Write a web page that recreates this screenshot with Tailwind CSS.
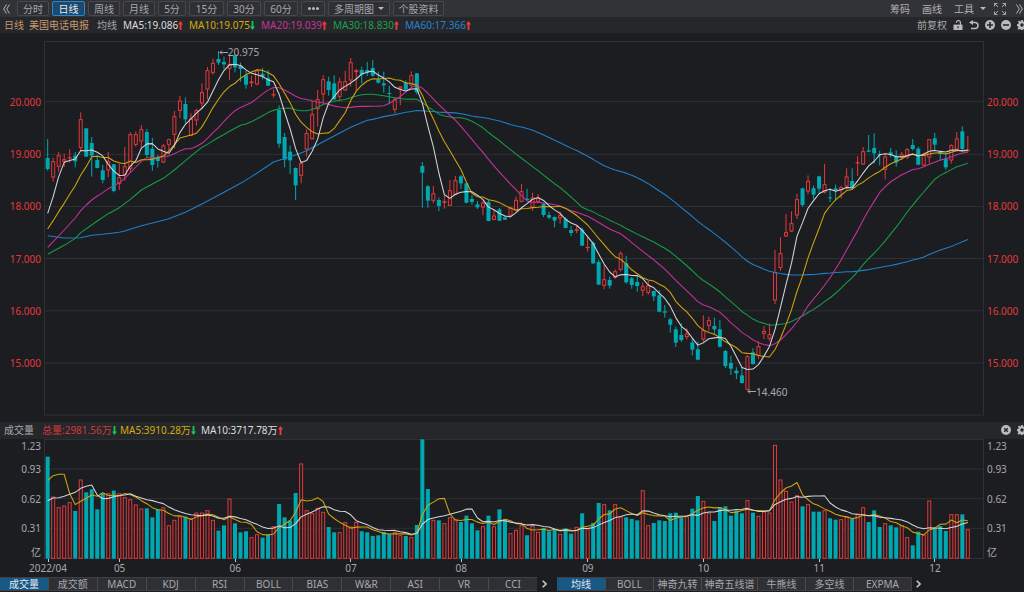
<!DOCTYPE html>
<html lang="zh-CN">
<head>
<meta charset="utf-8">
<title>美国电话电报 日线</title>
<meta name="viewport" content="width=device-width, initial-scale=1">
<script src="https://cdn.jsdelivr.net/npm/@tailwindcss/browser@4"></script>
</head>
<body class="flex h-screen flex-col overflow-hidden bg-[#1c1d21] font-['Noto_Sans','Noto_Sans_CJK_SC',sans-serif] text-[10px] leading-3 text-[#a6a8ac]">

<svg class="hidden">
  <symbol id="gear" viewBox="0 0 16 16"><path fill="currentColor" fill-rule="evenodd" d="M6.6 0h2.8l.5 2.3 1.2.5 2-1.3 2 2-1.3 2 .5 1.200 2.300.5v2.800l-2.300.5-.5 1.200 1.300 2-2 2-2-1.300-1.200.5-.5 2.300H6.600l-.5-2.300-1.200-.5-2 1.300-2-2 1.300-2-.5-1.200L0 9.400V6.600l2.300-.5.5-1.200-1.300-2 2-2 2 1.300 1.200-.5zM8 5.300a2.700 2.700 0 100 5.400 2.700 2.700 0 000-5.400z"/></symbol>
  <symbol id="up" viewBox="0 0 5 9"><path fill="#f4393c" d="M2.500 0L5 3.500H3.400V9H1.600V3.500H0z"/></symbol>
  <symbol id="down" viewBox="0 0 5 9"><path fill="#12c657" d="M2.500 9L5 5.500H3.400V0H1.600V5.500H0z"/></symbol>
</svg>

<header class="flex h-[17px] shrink-0 items-center justify-between overflow-hidden bg-[#323337]">
  <nav class="flex items-center gap-[3px] pl-[3px]" aria-label="周期">
    <button class="mr-[3px] h-[15px] w-2" aria-label="向左"><svg class="h-[10px] w-[7px]" viewBox="0 0 7 10" fill="none" stroke="#b2b4b8"><path d="M3.500.5L.7 5l2.800 4.500M6.500.5L3.700 5l2.800 4.500"/></svg></button>
    <button class="h-[15px] w-8 rounded-xs border border-[#46484d] bg-[#2e3034]">分时</button>
    <button class="h-[15px] w-[33px] rounded-xs border border-[#2389d2] bg-[#1d4a6b] text-[#e6e9ed]">日线</button>
    <button class="h-[15px] w-8 rounded-xs border border-[#46484d] bg-[#2e3034]">周线</button>
    <button class="h-[15px] w-8 rounded-xs border border-[#46484d] bg-[#2e3034]">月线</button>
    <button class="h-[15px] w-7 rounded-xs border border-[#46484d] bg-[#2e3034]">5分</button>
    <button class="h-[15px] w-[35px] rounded-xs border border-[#46484d] bg-[#2e3034]">15分</button>
    <button class="h-[15px] w-[34px] rounded-xs border border-[#46484d] bg-[#2e3034]">30分</button>
    <button class="h-[15px] w-[34px] rounded-xs border border-[#46484d] bg-[#2e3034]">60分</button>
    <button class="flex h-[15px] w-6 items-center justify-center gap-px rounded-xs border border-[#46484d] bg-[#2e3034]" aria-label="更多"><i class="size-[3px] rounded-full bg-[#b8babd]"></i><i class="size-[3px] rounded-full bg-[#b8babd]"></i><i class="size-[3px] rounded-full bg-[#b8babd]"></i></button>
    <button class="flex h-[15px] w-[62px] items-center justify-center gap-1 rounded-xs border border-[#46484d] bg-[#2e3034]">多周期图<svg class="h-[3px] w-[6px]" viewBox="0 0 6 3"><path d="M0 0h6L3 3z" fill="#b8babd"/></svg></button>
    <button class="h-[15px] w-[51px] rounded-xs border border-[#46484d] bg-[#2e3034]">个股资料</button>
  </nav>
  <nav class="flex items-center text-[#b0b2b6]" aria-label="工具">
    <button class="mr-3">筹码</button>
    <button class="mr-3">画线</button>
    <button class="mr-2 flex items-center gap-[6px]">工具<svg class="h-[3px] w-[6px]" viewBox="0 0 6 3"><path d="M0 0h6L3 3z" fill="#b8babd"/></svg></button>
    <button class="mr-[10px]" aria-label="全屏"><svg class="size-3" viewBox="0 0 12 12" fill="none" stroke="#a6a8ac"><path d="M.5 3.500v-3h3M.5.5L4 4M8.500.5h3v3M11.500.5L8 4M.5 8.500v3h3M.5 11.500L4 8M8.500 11.500h3v-3M11.500 11.500L8 8"/></svg></button>
    <button class="w-2" aria-label="向右"><svg class="h-[10px] w-[7px]" viewBox="0 0 7 10" fill="none" stroke="#b2b4b8"><path d="M.5.5L3.300 5 .5 9.500M3.500.5L6.300 5 3.500 9.500"/></svg></button>
  </nav>
</header>

<div class="flex h-4 shrink-0 items-center justify-between overflow-hidden bg-[#26272b]">
  <div class="flex items-center whitespace-nowrap pl-1">
    <span class="w-[25px] text-[#c9996b]">日线</span>
    <span class="w-[68px] text-[#c9996b]">美国电话电报</span>
    <span class="w-[26px]">均线</span>
    <span class="flex w-[66px] items-center text-[#dcdddf]">MA5:19.086<svg class="h-[9px] w-[5px]"><use href="#up"/></svg></span>
    <span class="flex w-[72px] items-center text-[#d5aa0c]">MA10:19.075<svg class="h-[9px] w-[5px]"><use href="#down"/></svg></span>
    <span class="flex w-[72px] items-center text-[#c9349c]">MA20:19.039<svg class="h-[9px] w-[5px]"><use href="#up"/></svg></span>
    <span class="flex w-[72px] items-center text-[#17a34a]">MA30:18.830<svg class="h-[9px] w-[5px]"><use href="#up"/></svg></span>
    <span class="flex items-center text-[#2384d4]">MA60:17.366<svg class="h-[9px] w-[5px]"><use href="#up"/></svg></span>
  </div>
  <div class="-mr-[3px] flex items-center gap-[6px] text-[#b8babd]">
    <button class="text-[#a6a8ac]">前复权</button>
    <button aria-label="锁定"><svg class="size-[10px]" viewBox="0 0 10 10"><path d="M3.400 2.800V2.600a2 2 0 014 0V5" fill="none" stroke="currentColor" stroke-width="1.200"/><path d="M.5 4.600h9V10h-9z" fill="currentColor"/><path d="M4.400 6.200h1.200v2H4.400z" fill="#26272b"/></svg></button>
    <button aria-label="撤销"><svg class="size-[10px]" viewBox="0 0 10 10"><path d="M3 2.500h3a3 3 0 010 6H2" fill="none" stroke="currentColor" stroke-width="1.500"/><path d="M0 2.500L4 0v5z" fill="currentColor"/></svg></button>
    <button aria-label="放大"><svg class="size-[10px]" viewBox="0 0 10 10"><circle cx="5" cy="5" r="5" fill="currentColor"/><path d="M5 2v6M2 5h6" stroke="#26272b" stroke-width="1.600"/></svg></button>
    <button aria-label="缩小"><svg class="size-[10px]" viewBox="0 0 10 10"><circle cx="5" cy="5" r="5" fill="currentColor"/><path d="M2 5h6" stroke="#26272b" stroke-width="1.600"/></svg></button>
    <button aria-label="设置"><svg class="size-[10px]"><use href="#gear"/></svg></button>
  </div>
</div>

<main class="flex min-h-0 flex-1 text-[#e2393c]">
  <div class="flex w-11 shrink-0 flex-col justify-between pr-[3px] pt-[63px] pb-[53px] text-right">
    <span>20.000</span><span>19.000</span><span>18.000</span><span>17.000</span><span>16.000</span><span>15.000</span>
  </div>
  <div class="relative mt-[7px] mb-[6px] min-w-0 flex-1">
    <svg id="price" class="block h-full w-full" viewBox="132 0 2820 1128" preserveAspectRatio="none" role="img" aria-label="K线图"></svg>
    <span class="absolute top-[1.600%] left-[18.600%] flex items-center text-[#a6a8ac]"><svg class="h-[5px] w-[9px]" viewBox="0 0 9 5" fill="none" stroke="#a6a8ac"><path d="M9 2.500H1M3 .5l-2 2 2 2"/></svg>20.975</span>
    <span class="absolute top-[92%] left-[74.800%] flex items-center text-[#a6a8ac]"><svg class="h-[5px] w-[9px]" viewBox="0 0 9 5" fill="none" stroke="#a6a8ac"><path d="M9 2.500H1M3 .5l-2 2 2 2"/></svg>14.460</span>
  </div>
  <div class="flex w-10 shrink-0 flex-col justify-between pl-[3px] pt-[63px] pb-[53px]">
    <span>20.000</span><span>19.000</span><span>18.000</span><span>17.000</span><span>16.000</span><span>15.000</span>
  </div>
</main>

<section class="shrink-0">
  <div class="flex h-[17px] items-center justify-between overflow-hidden bg-[#26272b] pb-px">
    <div class="flex items-center whitespace-nowrap pl-1">
      <span class="w-[38px]">成交量</span>
      <span class="flex w-[78px] items-center text-[#d0383b]">总量:2981.56万<svg class="h-[9px] w-[5px]"><use href="#down"/></svg></span>
      <span class="flex w-[81px] items-center text-[#d5aa0c]">MA5:3910.28万<svg class="h-[9px] w-[5px]"><use href="#down"/></svg></span>
      <span class="flex items-center text-[#dcdddf]">MA10:3717.78万<svg class="h-[9px] w-[5px]"><use href="#up"/></svg></span>
    </div>
    <div class="-mr-[3px] flex items-center gap-[6px] text-[#b8babd]">
      <button aria-label="关闭"><svg class="size-[10px]" viewBox="0 0 10 10"><circle cx="5" cy="5" r="5" fill="currentColor"/><path d="M3.200 3.200l3.600 3.600M6.800 3.200L3.200 6.800" stroke="#26272b" stroke-width="1.400"/></svg></button>
      <button aria-label="指标设置"><svg class="size-[10px]"><use href="#gear"/></svg></button>
    </div>
  </div>
  <div class="flex h-[120px]">
    <div class="grid w-11 shrink-0 grid-rows-[14px_32px_28px_30px_18px] items-center pr-[3px] text-right">
      <span>1.23</span><span>0.93</span><span>0.62</span><span>0.31</span><span>亿</span>
    </div>
    <svg id="volume" class="block h-full min-w-0 flex-1" viewBox="132 57 2820 360" preserveAspectRatio="none" role="img" aria-label="成交量图"></svg>
    <div class="grid w-10 shrink-0 grid-rows-[14px_32px_28px_30px_18px] items-center pl-[3px]">
      <span>1.23</span><span>0.93</span><span>0.62</span><span>0.31</span><span>亿</span>
    </div>
  </div>
  <div class="flex h-[18px] pr-14 pl-12">
    <div class="w-0 flex-[13]"><div class="flex w-12 -translate-x-1/2 flex-col items-center"><i class="h-[3px] w-px bg-[#c4c6c9]"></i><span>2022/04</span></div></div>
    <div class="w-0 flex-[21]"><div class="flex w-12 -translate-x-1/2 flex-col items-center"><i class="h-[3px] w-px bg-[#c4c6c9]"></i><span>05</span></div></div>
    <div class="w-0 flex-[21]"><div class="flex w-12 -translate-x-1/2 flex-col items-center"><i class="h-[3px] w-px bg-[#c4c6c9]"></i><span>06</span></div></div>
    <div class="w-0 flex-[20]"><div class="flex w-12 -translate-x-1/2 flex-col items-center"><i class="h-[3px] w-px bg-[#c4c6c9]"></i><span>07</span></div></div>
    <div class="w-0 flex-[23]"><div class="flex w-12 -translate-x-1/2 flex-col items-center"><i class="h-[3px] w-px bg-[#c4c6c9]"></i><span>08</span></div></div>
    <div class="w-0 flex-[21]"><div class="flex w-12 -translate-x-1/2 flex-col items-center"><i class="h-[3px] w-px bg-[#c4c6c9]"></i><span>09</span></div></div>
    <div class="w-0 flex-[21]"><div class="flex w-12 -translate-x-1/2 flex-col items-center"><i class="h-[3px] w-px bg-[#c4c6c9]"></i><span>10</span></div></div>
    <div class="w-0 flex-[21]"><div class="flex w-12 -translate-x-1/2 flex-col items-center"><i class="h-[3px] w-px bg-[#c4c6c9]"></i><span>11</span></div></div>
    <div class="w-0 flex-[6]"><div class="flex w-12 -translate-x-1/2 flex-col items-center"><i class="h-[3px] w-px bg-[#c4c6c9]"></i><span>12</span></div></div>
  </div>
</section>

<footer class="flex h-[15px] shrink-0 items-stretch whitespace-nowrap pb-px">
  <div class="flex w-[537px] divide-x divide-[#4a4b50] border-y border-[#3e4045] bg-[#2e3034]">
    <button class="flex-1 bg-[#185886] text-[#e6e9ed]">成交量</button>
    <button class="flex-1">成交额</button>
    <button class="flex-1">MACD</button>
    <button class="flex-1">KDJ</button>
    <button class="flex-1">RSI</button>
    <button class="flex-1">BOLL</button>
    <button class="flex-1">BIAS</button>
    <button class="flex-1">W&amp;R</button>
    <button class="flex-1">ASI</button>
    <button class="flex-1">VR</button>
    <button class="flex-1">CCI</button>
  </div>
  <button class="flex w-5 items-center justify-center pr-[6px]" aria-label="更多副图指标"><svg class="h-2 w-[5px]" viewBox="0 0 5 8" fill="none" stroke="#c4c6c9" stroke-width="1.600"><path d="M.7.7L4 4 .7 7.300"/></svg></button>
  <div class="flex divide-x divide-[#4a4b50] border-y border-r border-[#3e4045] bg-[#2e3034]">
    <button class="w-[49px] bg-[#185886] text-[#e6e9ed]">均线</button>
    <button class="w-12">BOLL</button>
    <button class="w-12">神奇九转</button>
    <button class="w-[56px]">神奇五线谱</button>
    <button class="w-12">牛熊线</button>
    <button class="w-12">多空线</button>
    <button class="w-[57px]">EXPMA</button>
  </div>
  <button class="flex w-4 items-center justify-center pr-1" aria-label="更多主图指标"><svg class="h-2 w-[5px]" viewBox="0 0 5 8" fill="none" stroke="#c4c6c9" stroke-width="1.600"><path d="M.7.7L4 4 .7 7.300"/></svg></button>
</footer>

<script>
// One session per entry: r = rising, g = falling, then high, body top, body bottom, low in plot units.
const sessions = `g297,354,387,392 r353,364,412,425 r336,346,380,395 r341,358,365,381 r328,352,353,368 g336,347,364,382 r217,238,324,330 g265,265,350,350 g291,309,347,410 g345,360,384,385
g375,391,420,430 r336,364,391,412 g372,373,453,457 r370,412,431,450 r321,379,404,422 r276,283,386,398 r274,283,314,320 r255,268,304,324 g267,276,345,352 g294,326,375,392
g345,353,363,383 r312,317,367,369 r296,298,314,335 r213,229,284,325 r168,182,212,234 g172,192,238,250 r220,236,287,288 r206,211,241,257 r130,157,190,206 r81,91,148,178
r56,69,98,104 g33,57,68,75 g50,66,73,88 r46,72,86,120 g44,46,82,97 g68,77,87,125 g92,106,134,146 r107,125,129,141 r88,92,133,136 g84,101,110,118
g90,114,137,138 r148,163,166,173 g196,210,311,323 g279,291,359,382 g316,335,361,402 g382,384,436,480 r365,370,407,430 r268,280,328,350 r184,223,297,299 r150,178,207,260
r106,118,163,190 g110,124,150,167 g106,130,178,181 r113,125,170,184 r92,124,151,153 r54,67,121,140 r86,91,96,152 g80,90,103,130 g66,90,97,108 g60,84,107,110
g95,118,128,130 g95,130,136,158 g137,159,161,193 r171,178,209,220 r138,140,146,196 g121,127,149,151 r94,106,136,140 g99,100,157,163 g366,378,398,503 g435,439,482,503
r438,460,482,490 g472,480,498,513 r468,484,488,506 r420,451,497,498 r408,421,464,466 g405,409,430,446 g428,430,488,490 g465,477,486,494 g483,493,502,507 r483,488,502,526
g478,486,543,544 r510,527,539,540 g504,508,542,543 g527,532,539,540 r500,502,527,528 r470,480,512,515 r432,454,485,487 g446,476,480,482 r458,473,502,512 r462,475,485,490
g488,492,525,531 g515,525,533,537 g530,531,542,562 r515,526,535,551 g532,536,564,565 g558,570,579,588 r558,568,572,580 g563,569,617,618 r592,621,623,635 g604,609,670,672
g660,666,734,735 r675,718,737,748 g710,720,737,746 r688,694,713,717 r634,640,689,694 g647,670,727,731 g711,715,735,746 g706,726,738,755 r727,739,752,769 r722,736,758,764
g752,753,769,783 g751,766,815,817 g795,814,818,833 g833,838,854,878 g860,868,908,921 g850,885,900,906 r865,881,891,898 g895,907,929,946 g904,928,959,961 r826,871,898,905
r830,841,857,872 g833,858,868,884 g840,868,920,922 g930,933,978,984 g947,969,986,1005 g982,992,1000,1017 g982,1006,1029,1030 r945,949,1049,1051 g925,937,972,974 r904,919,947,958
r858,873,881,897 r850,883,896,903 r630,697,781,792 r592,640,684,692 r522,577,589,591 r514,550,574,576 r461,478,526,537 g443,445,495,500 r406,423,454,462 g437,445,464,478
g407,409,446,460 r372,433,457,460 g445,472,474,486 g434,445,452,483 r437,442,450,475 r385,410,439,448 g385,423,443,445 r348,367,369,408 r321,334,373,375 g285,331,335,336
g280,324,340,370 g332,342,346,376 r340,350,389,418 g324,337,346,352 g331,347,368,380 r336,343,352,360 r324,328,352,357 g297,315,327,331 g320,326,374,376 r338,343,376,378
r297,298,352,370 g279,295,314,332 g332,336,342,363 g340,355,382,389 r313,316,361,371 r276,296,328,332 g259,274,327,332 r288,330,332,334`
  .split(/\s+/).map(s => ({ up: s[0] === 'r', v: s.slice(1).split(',').map(Number) }));

const volumes = [110,230,262,257,247,273,179,217,208,268,220,220,212,220,232,238,254,266,265,292,268,262,316,300,290,290,295,278,278,271,300,332,316,236,310,337,334,352,343,353,
343,319,252,292,302,219,131,271,280,264,276,321,337,337,307,320,306,334,337,348,346,336,342,336,346,348,352,315,58,207,300,301,310,292,298,306,287,310,331,319,
287,319,268,297,340,330,316,346,317,336,324,334,327,342,325,341,321,280,326,309,249,253,271,253,290,292,297,301,211,316,309,301,303,280,278,292,289,266,228,243,
278,303,262,259,287,271,280,241,278,288,275,278,75,179,213,245,226,259,253,275,275,271,295,299,298,290,296,281,262,306,271,321,310,316,322,316,352,376,335,344,
242,325,318,333,283,283,283,328];

const RED = '#e2393c', TEAL = '#00a9b1';
const x = i => 143 + 16.53 * i;
const line = (x1, y1, x2, y2, c, w = 3) => `<path d="M${x1} ${y1}L${x2} ${y2}" stroke="${c}" stroke-width="${w}"/>`;
const box = (cx, top, bottom, up) => up
  ? `<rect x="${cx - 4.5}" y="${top + 1}" width="9" height="${Math.max(bottom - top - 2, 1)}" fill="#1c1d21" stroke="${RED}" stroke-width="3"/>`
  : `<rect x="${cx - 6}" y="${top}" width="12" height="${Math.max(bottom - top, 3)}" fill="${TEAL}"/>`;

// Moving average; `lead` holds [index, value] points for sessions whose window starts before the data.
function average(values, n, lead, color) {
  const pts = lead.map(([i, v]) => [x(i), v]);
  for (let i = n - 1; i < values.length; i++) {
    let sum = 0;
    for (let k = i - n + 1; k <= i; k++) sum += values[k];
    pts.push([x(i), sum / n]);
  }
  return `<polyline fill="none" stroke="${color}" stroke-width="3.200" stroke-linejoin="round" points="${pts.map(p => p[0].toFixed(1) + ',' + p[1].toFixed(1)).join(' ')}"/>`;
}
const seq = a => a.map((v, i) => [i, v]);

let p = '';
[4.5, 185, 343, 499.5, 655.5, 812.5, 969, 1125].forEach(y => p += line(132, y, 2952, y, '#2f3034'));
p += line(133.5, 4, 133.5, 1126, '#2f3034') + line(2950.5, 4, 2950.5, 1126, '#2f3034');
sessions.forEach(({ up, v: [h, t, b, l] }, i) => {
  p += line(x(i), h, x(i), l, up ? RED : TEAL, 3) + box(x(i), t, b, up);
});
const closes = sessions.map(s => s.up ? s.v[1] : s.v[2]);
p += average(closes, 60, [[0,587],[3,594],[6,593],[8,586],[10,583],[13,577],[14,573],[17,557],[21,541],[22,536],[25,517],[28,492],[32,457],[35,430],[37,410],[41,366],[45,345],[47,332],[50,305],[55,262],[58,241]], '#1e7fcb');
p += average(closes, 30, [[0,643],[3,616],[5,595],[6,578],[9,543],[11,521],[13,503],[15,478],[17,450],[19,432],[21,415],[23,390],[25,362],[27,335],[28,322]], '#169c47');
p += average(closes, 20, seq([622,605,588,570,552,534,512,495,480,468,458,446,437,428,415,398,381,364,353]), '#c5329a');
p += average(closes, 10, seq([567,542,515,490,463,437,405,380,350]), '#cda40c');
p += average(closes, 5, seq([520,470,410,367]), '#d2d3d5');
document.getElementById('price').innerHTML = p;

let q = '';
[58.5, 147, 236, 325, 415.5].forEach(y => q += line(132, y, 2952, y, '#2f3034'));
q += line(133.5, 58, 133.5, 417, '#2f3034') + line(2950.5, 58, 2950.5, 417, '#2f3034');
volumes.forEach((v, i) => q += box(x(i), v, 416, sessions[i].up));
q += average(volumes, 5, seq([182,167,163,163]), '#cda40c');
q += average(volumes, 10, seq([242,234,233,229,223,217,205,199,195]), '#d2d3d5');
document.getElementById('volume').innerHTML = q;
</script>
</body>
</html>
